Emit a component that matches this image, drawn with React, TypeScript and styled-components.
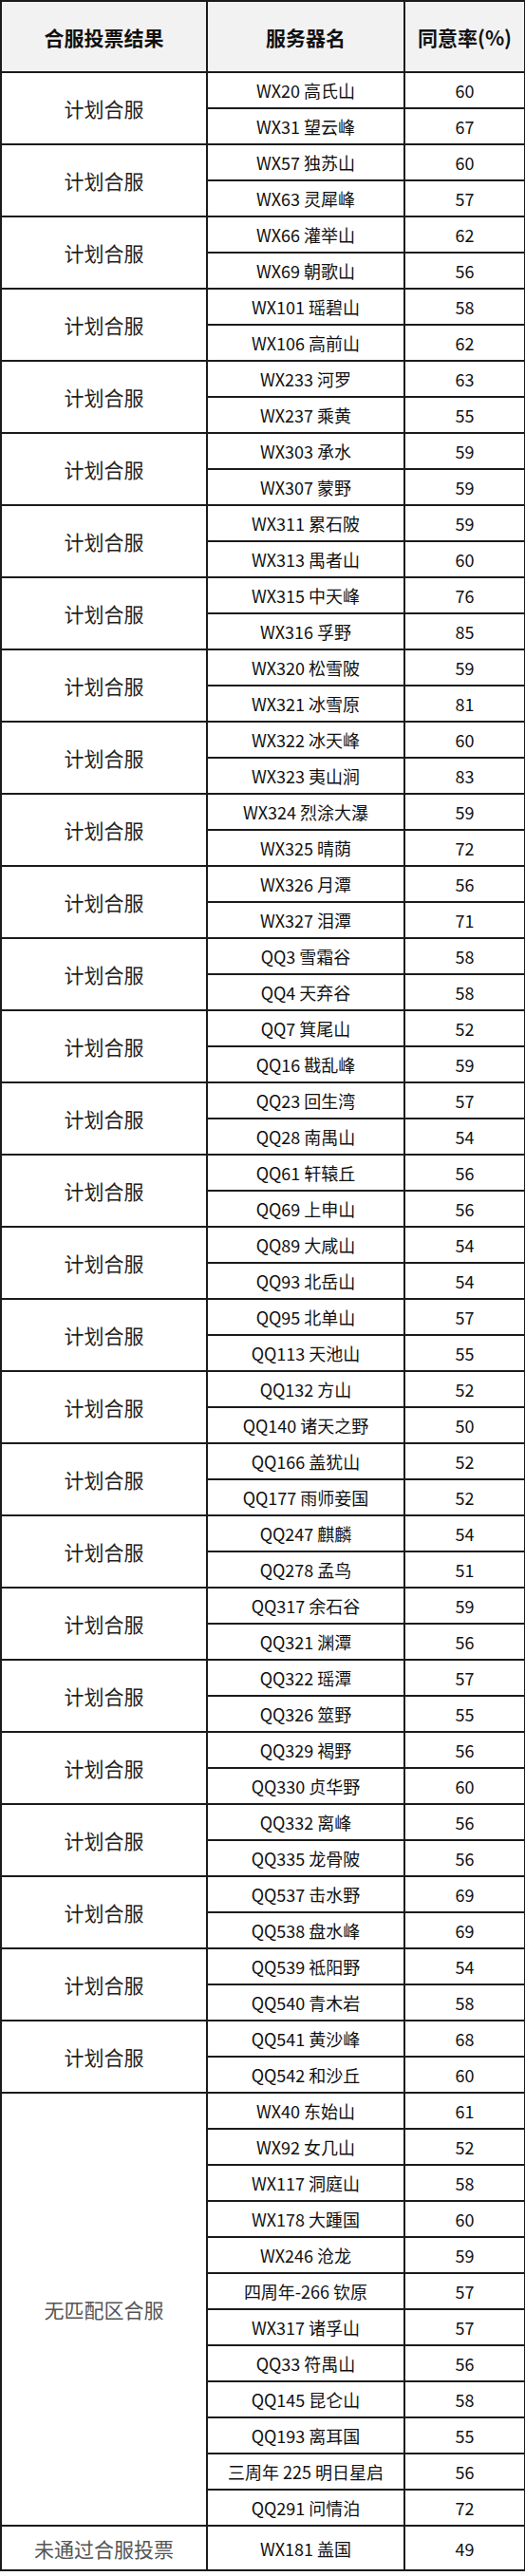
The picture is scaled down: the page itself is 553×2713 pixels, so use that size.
import React from 'react';
import styled, { createGlobalStyle } from 'styled-components';

type Server = { name: string; rate: number };
type Group = { result: string; muted?: boolean; tall?: boolean; servers: Server[] };

const plan = (a: string, ar: number, b: string, br: number): Group => ({
  result: '计划合服',
  servers: [
    { name: a, rate: ar },
    { name: b, rate: br },
  ],
});

const groups: Group[] = [
  plan('WX20 高氏山', 60, 'WX31 望云峰', 67),
  plan('WX57 独苏山', 60, 'WX63 灵犀峰', 57),
  plan('WX66 灌举山', 62, 'WX69 朝歌山', 56),
  plan('WX101 瑶碧山', 58, 'WX106 高前山', 62),
  plan('WX233 河罗', 63, 'WX237 乘黄', 55),
  plan('WX303 承水', 59, 'WX307 蒙野', 59),
  plan('WX311 累石陂', 59, 'WX313 禺者山', 60),
  plan('WX315 中天峰', 76, 'WX316 孚野', 85),
  plan('WX320 松雪陂', 59, 'WX321 冰雪原', 81),
  plan('WX322 冰天峰', 60, 'WX323 夷山涧', 83),
  plan('WX324 烈涂大瀑', 59, 'WX325 晴荫', 72),
  plan('WX326 月潭', 56, 'WX327 泪潭', 71),
  plan('QQ3 雪霜谷', 58, 'QQ4 天弃谷', 58),
  plan('QQ7 箕尾山', 52, 'QQ16 戡乱峰', 59),
  plan('QQ23 回生湾', 57, 'QQ28 南禺山', 54),
  plan('QQ61 轩辕丘', 56, 'QQ69 上申山', 56),
  plan('QQ89 大咸山', 54, 'QQ93 北岳山', 54),
  plan('QQ95 北单山', 57, 'QQ113 天池山', 55),
  plan('QQ132 方山', 52, 'QQ140 诸天之野', 50),
  plan('QQ166 盖犹山', 52, 'QQ177 雨师妾国', 52),
  plan('QQ247 麒麟', 54, 'QQ278 孟鸟', 51),
  plan('QQ317 余石谷', 59, 'QQ321 渊潭', 56),
  plan('QQ322 瑶潭', 57, 'QQ326 筮野', 55),
  plan('QQ329 褐野', 56, 'QQ330 贞华野', 60),
  plan('QQ332 离峰', 56, 'QQ335 龙骨陂', 56),
  plan('QQ537 击水野', 69, 'QQ538 盘水峰', 69),
  plan('QQ539 祗阳野', 54, 'QQ540 青木岩', 58),
  plan('QQ541 黄沙峰', 68, 'QQ542 和沙丘', 60),
  {
    result: '无匹配区合服',
    muted: true,
    servers: [
      { name: 'WX40 东始山', rate: 61 },
      { name: 'WX92 女几山', rate: 52 },
      { name: 'WX117 洞庭山', rate: 58 },
      { name: 'WX178 大踵国', rate: 60 },
      { name: 'WX246 沧龙', rate: 59 },
      { name: '四周年-266 钦原', rate: 57 },
      { name: 'WX317 诸孚山', rate: 57 },
      { name: 'QQ33 符禺山', rate: 56 },
      { name: 'QQ145 昆仑山', rate: 58 },
      { name: 'QQ193 离耳国', rate: 55 },
      { name: '三周年 225 明日星启', rate: 56 },
      { name: 'QQ291 问情泊', rate: 72 },
    ],
  },
  {
    result: '未通过合服投票',
    muted: true,
    tall: true,
    servers: [{ name: 'WX181 盖国', rate: 49 }],
  },
];

const GlobalStyle = createGlobalStyle`
  body {
    margin: 0;
    background: #fff;
    font-family: "Noto Sans CJK SC", "Noto Sans", sans-serif;
  }
`;

const Table = styled.table`
  width: 552px;
  border-collapse: collapse;
  table-layout: fixed;
  color: #111;
`;

const HeadCell = styled.th`
  height: 73px;
  background: #f2f2f2;
  border: 2px solid #1b1b1b;
  font-size: 21px;
  font-weight: 700;
  text-align: center;
  padding: 0;
`;

const GroupCell = styled.td<{ $muted?: boolean }>`
  border: 2px solid #1b1b1b;
  text-align: center;
  font-size: 21px;
  font-weight: 400;
  color: ${(p) => (p.$muted ? '#555' : '#222')};
  padding: 0;
`;

const Cell = styled.td<{ $tall?: boolean }>`
  height: ${(p) => (p.$tall ? 45 : 36)}px;
  border: 2px solid #1b1b1b;
  text-align: center;
  font-size: 18px;
  padding: 0;
  white-space: nowrap;
`;

const App: React.FC = () => {
  return (
    <>
      <GlobalStyle />
      <Table>
        <colgroup>
          <col style={{ width: 217 }} />
          <col style={{ width: 208 }} />
          <col style={{ width: 127 }} />
        </colgroup>
        <thead>
          <tr>
            <HeadCell>合服投票结果</HeadCell>
            <HeadCell>服务器名</HeadCell>
            <HeadCell>同意率(%)</HeadCell>
          </tr>
        </thead>
        <tbody>
          {groups.map((g, gi) =>
            g.servers.map((s, si) => (
              <tr key={`${gi}-${si}`}>
                {si === 0 && (
                  <GroupCell rowSpan={g.servers.length} $muted={g.muted}>
                    {g.result}
                  </GroupCell>
                )}
                <Cell $tall={g.tall}>{s.name}</Cell>
                <Cell $tall={g.tall}>{s.rate}</Cell>
              </tr>
            ))
          )}
        </tbody>
      </Table>
    </>
  );
};

export default App;
